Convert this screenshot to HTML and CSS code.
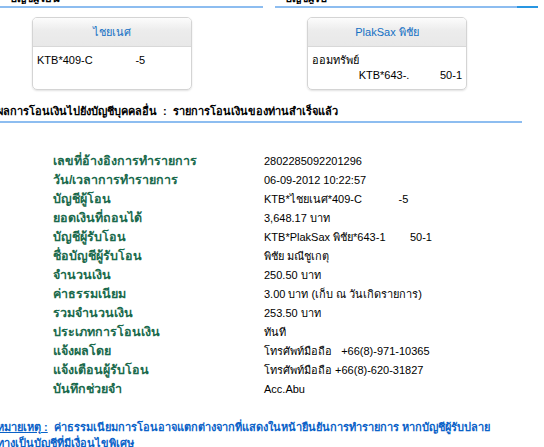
FILE: index.html
```html
<!DOCTYPE html>
<html lang="th">
<head>
    <meta charset="UTF-8">
    <title>ผลการโอนเงิน</title>
    <link rel="stylesheet" href="styles.css">
</head>
<body>
    <div class="accounts">
        <div class="side">
            <div class="cut-title">บัญชีผู้โอน</div>
            <div class="rule"></div>
            <div class="card">
                <div class="card-head">ไชยเนศ</div>
                <div class="card-body">KTB*409-C&nbsp;&nbsp;&nbsp;&nbsp;&nbsp;&nbsp;&nbsp;&nbsp;&nbsp;&nbsp;&nbsp;&nbsp;&nbsp;&nbsp;-5</div>
            </div>
        </div>
        <div class="side">
            <div class="cut-title">บัญชีผู้รับ</div>
            <div class="rule rule-right"></div>
            <div class="card">
                <div class="card-head">PlakSax พิชัย</div>
                <div class="card-body">
                    ออมทรัพย์
                    <div class="right">KTB*643-.&nbsp;&nbsp;&nbsp;&nbsp;&nbsp;&nbsp;&nbsp;&nbsp;&nbsp;&nbsp;50-1</div>
                </div>
            </div>
        </div>
    </div>

    <h2 class="result-title">ผลการโอนเงินไปยังบัญชีบุคคลอื่น &nbsp;:&nbsp; รายการโอนเงินของท่านสำเร็จแล้ว</h2>
    <div class="rule rule-wide"></div>

    <div class="details">
        <div class="label">เลขที่อ้างอิงการทำรายการ</div><div class="value">2802285092201296</div>
        <div class="label">วัน/เวลาการทำรายการ</div><div class="value">06-09-2012 10:22:57</div>
        <div class="label">บัญชีผู้โอน</div><div class="value">KTB*ไชยเนศ*409-C&nbsp;&nbsp;&nbsp;&nbsp;&nbsp;&nbsp;&nbsp;&nbsp;&nbsp;&nbsp;&nbsp;&nbsp;-5</div>
        <div class="label">ยอดเงินที่ถอนได้</div><div class="value">3,648.17 บาท</div>
        <div class="label">บัญชีผู้รับโอน</div><div class="value">KTB*PlakSax พิชัย*643-1&nbsp;&nbsp;&nbsp;&nbsp;&nbsp;&nbsp;&nbsp;&nbsp;50-1</div>
        <div class="label">ชื่อบัญชีผู้รับโอน</div><div class="value">พิชัย มณีชูเกตุ</div>
        <div class="label">จำนวนเงิน</div><div class="value">250.50 บาท</div>
        <div class="label">ค่าธรรมเนียม</div><div class="value">3.00 บาท (เก็บ ณ วันเกิดรายการ)</div>
        <div class="label">รวมจำนวนเงิน</div><div class="value">253.50 บาท</div>
        <div class="label">ประเภทการโอนเงิน</div><div class="value">ทันที</div>
        <div class="label">แจ้งผลโดย</div><div class="value">โทรศัพท์มือถือ &nbsp; +66(8)-971-10365</div>
        <div class="label">แจ้งเตือนผู้รับโอน</div><div class="value">โทรศัพท์มือถือ +66(8)-620-31827</div>
        <div class="label">บันทึกช่วยจำ</div><div class="value">Acc.Abu</div>
    </div>

    <p class="note"><u>หมายเหตุ :</u>&nbsp; ค่าธรรมเนียมการโอนอาจแตกต่างจากที่แสดงในหน้ายืนยันการทำรายการ หากบัญชีผู้รับปลาย<br>ทางเป็นบัญชีที่มีเงื่อนไขพิเศษ</p>
</body>
</html>
```

FILE: styles.css
```css
body {
    margin: 0;
    font-family: Tahoma, "Liberation Sans", "DejaVu Sans", sans-serif;
    font-size: 11px;
    color: #000;
    background: #fff;
    overflow: hidden;
}
.accounts {
    display: flex;
    gap: 12px;
}
.side {
    width: 263px;
}
.cut-title {
    height: 4px;
    line-height: 12px;
    overflow: hidden;
    padding-left: 10px;
    font-weight: bold;
    display: flex;
    align-items: flex-end;
}
.rule {
    height: 2px;
    margin-top: 2px;
    background: #8dbdf0;
}
.rule-right {
    background: linear-gradient(to right, #8dbdf0 92%, #2896e2 92%);
}
.rule-wide {
    width: 522px;
    margin-top: 0;
}
.card {
    width: 158px;
    margin: 9px 0 0 32px;
    border: 1px solid #d4d4d4;
    border-radius: 5px;
    box-shadow: 0 1px 2px rgba(0, 0, 0, 0.12);
    overflow: hidden;
}
.card-head {
    height: 28px;
    line-height: 29px;
    text-align: center;
    color: #1470c4;
    background: linear-gradient(#fcfcfc, #ececec 45%, #e8e8e8);
    border-bottom: 1px solid #d8d8d8;
}
.card-body {
    height: 36px;
    padding: 6px 4px 0 4px;
    line-height: 15px;
}
.right {
    text-align: right;
}
.result-title {
    margin: 14px 0 0 -3px;
    font-size: 11px;
    font-weight: bold;
    line-height: 14px;
    height: 17px;
}
.details {
    display: grid;
    grid-template-columns: 211px auto;
    padding: 28px 0 0 53px;
    grid-auto-rows: 19px;
    align-items: center;
}
.label {
    color: #1a6a4c;
    font-weight: bold;
    font-size: 12.5px;
}
.value {
    white-space: nowrap;
}
.note {
    margin: 21px 0 0 -3px;
    color: #0a62c8;
    font-weight: bold;
    font-size: 11px;
    line-height: 16px;
    white-space: nowrap;
}
```
